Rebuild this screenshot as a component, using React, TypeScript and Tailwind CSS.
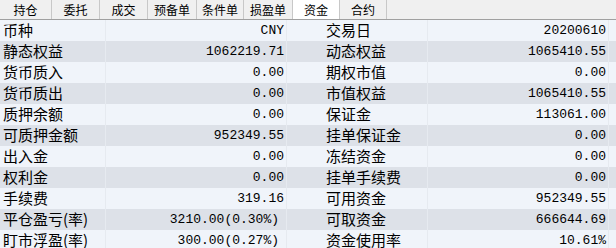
import React from "react";

const tabs: { t: string; w: string }[] = [
  { t: "持仓", w: "w-[52px]" },
  { t: "委托", w: "w-[48px]" },
  { t: "成交", w: "w-[48px]" },
  { t: "预备单", w: "w-[49px]" },
  { t: "条件单", w: "w-[47px]" },
  { t: "损盈单", w: "w-[49px]" },
  { t: "资金", w: "w-[47px]" },
  { t: "合约", w: "w-[47px]" },
];

const rows: [string, string, string, string][] = [
  ["币种", "CNY", "交易日", "20200610"],
  ["静态权益", "1062219.71", "动态权益", "1065410.55"],
  ["货币质入", "0.00", "期权市值", "0.00"],
  ["货币质出", "0.00", "市值权益", "1065410.55"],
  ["质押余额", "0.00", "保证金", "113061.00"],
  ["可质押金额", "952349.55", "挂单保证金", "0.00"],
  ["出入金", "0.00", "冻结资金", "0.00"],
  ["权利金", "0.00", "挂单手续费", "0.00"],
  ["手续费", "319.16", "可用资金", "952349.55"],
  ["平仓盈亏(率)", "3210.00(0.30%)", "可取资金", "666644.69"],
  ["盯市浮盈(率)", "300.00(0.27%)", "资金使用率", "10.61%"],
];

const cjk = "font-['Noto_Sans_CJK_SC','Noto_Sans',sans-serif]";
const mono = "font-['Liberation_Mono','DejaVu_Sans_Mono',monospace]";

export default function App() {
  return (
    <div className="w-[616px] h-[248px] overflow-hidden bg-[#f0f0f0]">
      <div className="flex h-[20px] border-b border-[#a0a0a0] bg-[#f0f0f0]">
        {tabs.map(({ t, w }) => (
          <div
            key={t}
            className={`${w} ${cjk} flex items-center justify-center text-[12px] leading-none text-black border-r border-[#c8c8c8] ${
              t === "资金" ? "bg-white" : ""
            }`}
          >
            {t}
          </div>
        ))}
      </div>
      <div className="grid grid-cols-[105px_180px_140px_180px_1fr] gap-x-px bg-[#e6eaf0]">
        {rows.map((r, i) => {
          const bg = i % 2 === 0 ? "bg-[#f0f4fa]" : "bg-[#dde1e8]";
          const pct = r[1].includes("%");
          return (
            <React.Fragment key={i}>
              <div className={`${bg} ${cjk} h-[21px] flex items-center pl-[3px] pb-[3px] text-[15px] leading-none text-black`}>
                {r[0]}
              </div>
              <div className={`${bg} ${mono} h-[21px] flex items-center justify-end ${pct ? "pr-[7px]" : "pr-[2px]"} pb-[1px] text-[13px] leading-none text-black`}>
                {r[1]}
              </div>
              <div className={`${bg} ${cjk} h-[21px] flex items-center pl-[39px] pb-[3px] text-[15px] leading-none text-black`}>
                {r[2]}
              </div>
              <div className={`${bg} ${mono} h-[21px] flex items-center justify-end pr-[2px] pb-[1px] text-[13px] leading-none text-black`}>
                {r[3]}
              </div>
              <div className={`${bg} h-[21px]`} />
            </React.Fragment>
          );
        })}
      </div>
    </div>
  );
}
